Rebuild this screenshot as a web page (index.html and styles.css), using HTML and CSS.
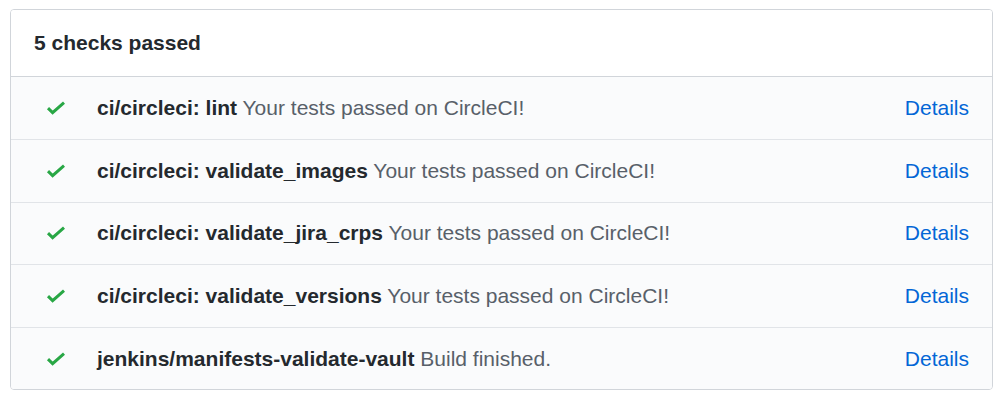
FILE: index.html
```html
<!DOCTYPE html>
<html>
<head>
<meta charset="utf-8">
<link rel="stylesheet" href="styles.css">
</head>
<body>
<div class="checks">
  <div class="checks-header">5 checks passed</div>
  <div class="check-row">
    <svg class="check-icon" viewBox="0 0 20 14" width="20" height="14"><path d="M2 7.2 L6.6 11.6 L18 1.6" fill="none" stroke="#28a745" stroke-width="3"/></svg>
    <div class="check-text"><strong>ci/circleci: lint</strong> <span class="desc">Your tests passed on CircleCI!</span></div>
    <a class="details" href="#">Details</a>
  </div>
  <div class="check-row">
    <svg class="check-icon" viewBox="0 0 20 14" width="20" height="14"><path d="M2 7.2 L6.6 11.6 L18 1.6" fill="none" stroke="#28a745" stroke-width="3"/></svg>
    <div class="check-text"><strong>ci/circleci: validate_images</strong> <span class="desc">Your tests passed on CircleCI!</span></div>
    <a class="details" href="#">Details</a>
  </div>
  <div class="check-row">
    <svg class="check-icon" viewBox="0 0 20 14" width="20" height="14"><path d="M2 7.2 L6.6 11.6 L18 1.6" fill="none" stroke="#28a745" stroke-width="3"/></svg>
    <div class="check-text"><strong>ci/circleci: validate_jira_crps</strong> <span class="desc">Your tests passed on CircleCI!</span></div>
    <a class="details" href="#">Details</a>
  </div>
  <div class="check-row">
    <svg class="check-icon" viewBox="0 0 20 14" width="20" height="14"><path d="M2 7.2 L6.6 11.6 L18 1.6" fill="none" stroke="#28a745" stroke-width="3"/></svg>
    <div class="check-text"><strong>ci/circleci: validate_versions</strong> <span class="desc">Your tests passed on CircleCI!</span></div>
    <a class="details" href="#">Details</a>
  </div>
  <div class="check-row">
    <svg class="check-icon" viewBox="0 0 20 14" width="20" height="14"><path d="M2 7.2 L6.6 11.6 L18 1.6" fill="none" stroke="#28a745" stroke-width="3"/></svg>
    <div class="check-text"><strong>jenkins/manifests-validate-vault</strong> <span class="desc">Build finished.</span></div>
    <a class="details" href="#">Details</a>
  </div>
</div>
</body>
</html>
```
FILE: styles.css
```css
html, body {
  margin: 0;
  padding: 0;
  background: #ffffff;
}
body {
  padding: 9px 0 0 10px;
  font-family: "Liberation Sans", Arial, sans-serif;
  font-size: 21px;
  color: #24292e;
}
.checks {
  width: 981px;
  border: 1.5px solid #d1d5da;
  border-radius: 4px;
  overflow: hidden;
}
.checks-header {
  height: 65.5px;
  display: flex;
  align-items: center;
  padding-left: 23px;
  font-weight: bold;
  background: #ffffff;
  border-bottom: 1.5px solid #d1d5da;
}
.check-row {
  height: 61.6px;
  display: flex;
  align-items: center;
  padding: 0 23px 0 35px;
  background: #fafbfc;
  border-top: 1.5px solid #e1e4e8;
}
.checks-header + .check-row {
  border-top: none;
  height: 62.6px;
}
.check-icon {
  flex: none;
  margin-right: 31px;
}
.check-text {
  flex: 1;
  white-space: nowrap;
}
.check-text strong {
  font-weight: bold;
  color: #24292e;
}
.desc {
  color: #586069;
}
.details {
  color: #0366d6;
  text-decoration: none;
}
```
